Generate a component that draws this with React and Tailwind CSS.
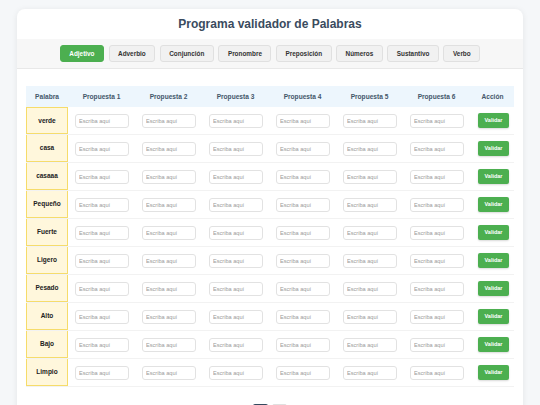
const tabs = [
  "Adjetivo",
  "Adverbio",
  "Conjunción",
  "Pronombre",
  "Preposición",
  "Números",
  "Sustantivo",
  "Verbo",
];

const words = [
  "verde",
  "casa",
  "casaaa",
  "Pequeño",
  "Fuerte",
  "Ligero",
  "Pesado",
  "Alto",
  "Bajo",
  "Limpio",
];

const cols = "grid grid-cols-[42px_repeat(6,67px)_45px]";

export default function App() {
  return (
    <div
      className="min-h-[405px] bg-[#f5f7f9] pt-[9px]"
      style={{ fontFamily: '"Liberation Sans", Arial, sans-serif' }}
    >
      <div className="mx-auto w-[506px] rounded-lg bg-white shadow-[0_1px_6px_rgba(0,0,0,0.08)] pb-4">
        <h1 className="h-[30px] flex items-center justify-center text-[12px] font-bold text-[#3a4b5e]">
          Programa validador de Palabras
        </h1>

        <div className="h-[30px] flex items-center justify-center gap-[4.5px] bg-[#f7f7f7] border-b border-[#e8e8e8]">
          {tabs.map((t, i) => (
            <button
              key={t}
              className={
                i === 0
                  ? "h-[17px] px-[8.5px] rounded-[3px] bg-[#4caf50] text-white text-[6.4px] font-bold border border-[#4caf50]"
                  : "h-[17px] px-[8.5px] rounded-[3px] bg-[#f1f1f1] text-[#333] text-[6.4px] font-bold border border-[#e0e0e0]"
              }
            >
              {t}
            </button>
          ))}
        </div>

        <div className="mx-[9px] mt-[17px]">
          <div className={`${cols} h-[21px] items-center bg-[#edf6fd] text-[6.6px] font-bold text-[#44566a]`}>
            <div className="text-center">Palabra</div>
            {[1, 2, 3, 4, 5, 6].map((n) => (
              <div key={n} className="text-center">
                Propuesta {n}
              </div>
            ))}
            <div className="text-center">Acción</div>
          </div>

          {words.map((w, r) => (
            <div key={w} className={`${cols} h-[28px] border-b border-[#f2f2f2]`}>
              <div
                className={
                  "flex items-center justify-center bg-[#fff7dc] border-x-[1.5px] border-b-[1.5px] border-[#f6dc6a] text-[6.5px] font-bold text-[#222] " +
                  (r === 0 ? "border-t-[1.5px]" : "")
                }
              >
                {w}
              </div>
              {[1, 2, 3, 4, 5, 6].map((n) => (
                <div key={n} className="flex items-center justify-center pl-[1px]">
                  <input
                    placeholder="Escriba aquí"
                    className="w-[54px] h-[14px] rounded-[3px] border border-[#e2e2e2] bg-white px-[3px] text-[5.6px] placeholder:text-[#9a9a9a] outline-none"
                  />
                </div>
              ))}
              <div className="flex items-center justify-center pl-[2px]">
                <button className="w-[31px] h-[15px] rounded-[2px] bg-[#4caf50] text-white text-[5.5px] font-bold shadow-[0_1px_2px_rgba(0,0,0,0.15)]">
                  Validar
                </button>
              </div>
            </div>
          ))}

          <div className="flex justify-center gap-[4px] mt-[17px]">
            <button aria-label="Página 1" className="w-[15px] h-[18px] rounded-[2px] bg-[#34495e]" />
            <button aria-label="Página 2" className="w-[15px] h-[18px] rounded-[2px] bg-white border border-[#e0e0e0]" />
          </div>
        </div>
      </div>
    </div>
  );
}
